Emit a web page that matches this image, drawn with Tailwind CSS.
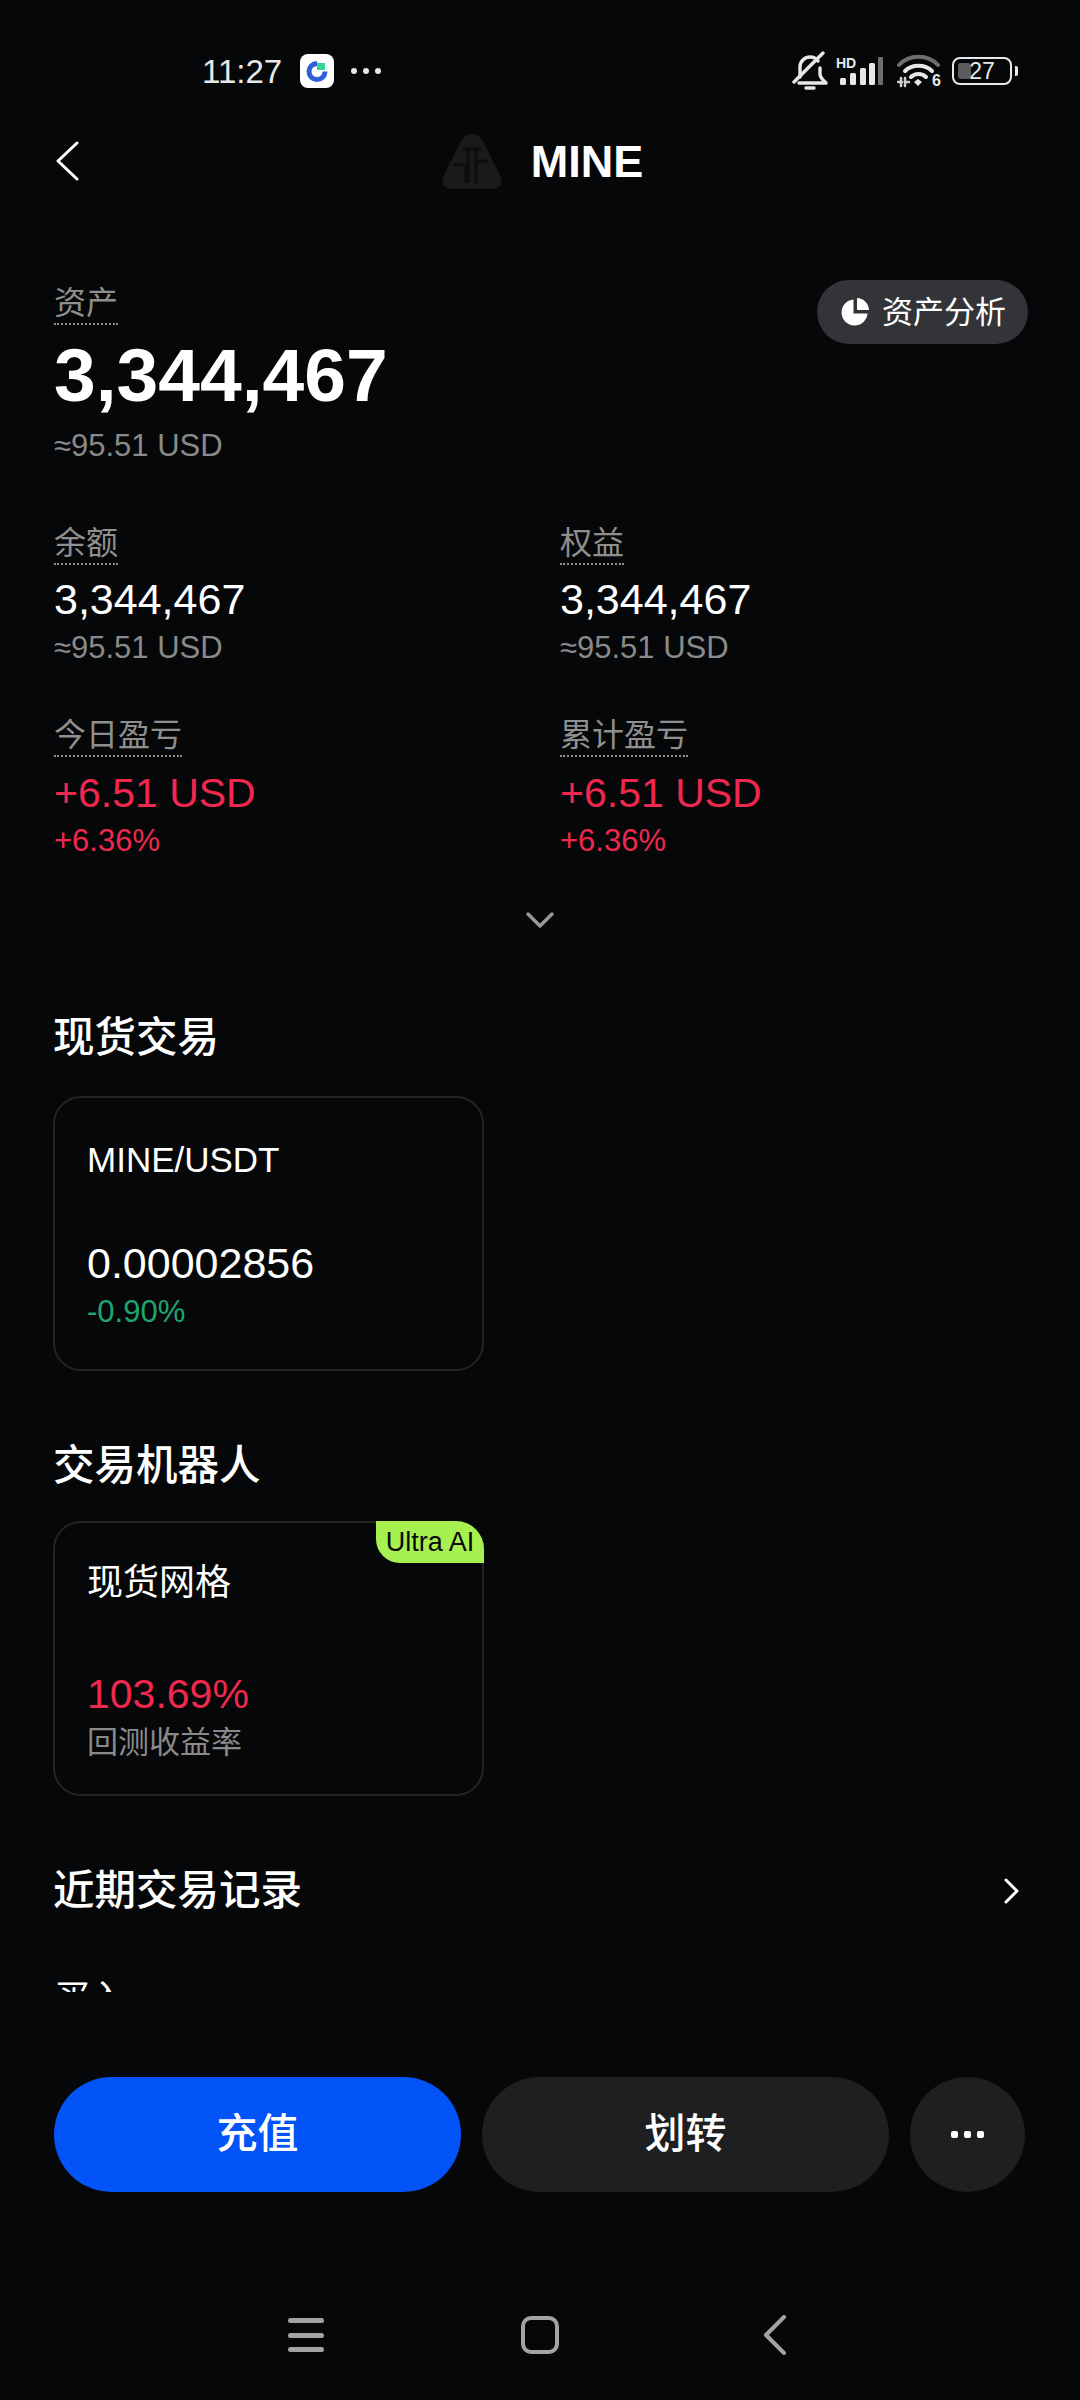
<!DOCTYPE html>
<html lang="zh-CN">
<head>
    <meta charset="UTF-8">
    <meta name="viewport" content="width=device-width, initial-scale=1.0">
    <title>MINE</title>
    <script src="https://cdn.jsdelivr.net/npm/@tailwindcss/browser@4"></script>
</head>
<body class="bg-[#060708]">
    <div class="w-[1080px] h-[2400px] flex flex-col overflow-hidden bg-[#060708] text-white [font-family:'Liberation_Sans','Noto_Sans_CJK_SC',sans-serif]">

        <!-- Status bar -->
        <div class="h-[118px] pt-[24px] pl-[202px] pr-[62px] flex items-center justify-between shrink-0">
            <div class="flex items-center">
                <span class="text-[33px] leading-none text-[#e8e8e8] w-[98px]">11:27</span>
                <div class="w-[34px] h-[34px] rounded-[8px] bg-white flex items-center justify-center">
                    <svg width="28" height="28" viewBox="0 0 28 28" fill="none">
                        <path d="M14 4 A10.5 10.5 0 1 0 24.5 14.5 H19.5 A5.5 5.5 0 1 1 14 9 Z" fill="#2f5fd8"/>
                        <rect x="14" y="6" width="8" height="7" fill="#35d69a"/>
                    </svg>
                </div>
                <div class="ml-[17px] flex gap-[6px]">
                    <span class="w-[6px] h-[6px] rounded-full bg-[#e8e8e8]"></span>
                    <span class="w-[6px] h-[6px] rounded-full bg-[#e8e8e8]"></span>
                    <span class="w-[6px] h-[6px] rounded-full bg-[#e8e8e8]"></span>
                </div>
            </div>
            <div class="flex items-center">
                <svg width="36" height="40" viewBox="0 0 36 40" fill="none" stroke="#e8e8e8" stroke-width="3.4" stroke-linecap="round" stroke-linejoin="round">
                    <path d="M8 26 V16 C8 10 13 6 18 6 C21 6 24 7 26 10"/>
                    <path d="M28 17 V23 C28 27 31 29 34 32 H7"/>
                    <path d="M2 31 L31 2"/>
                    <path d="M14 37 H22"/>
                </svg>
                <div class="relative ml-[10px] w-[46px] h-[34px]">
                    <span class="absolute left-[-2px] top-[2px] text-[14px] leading-none font-bold text-[#e8e8e8]">HD</span>
                    <svg class="absolute left-0 top-0" width="46" height="34" viewBox="0 0 46 34" fill="#e8e8e8">
                        <rect x="2" y="24" width="6" height="7" rx="1.5"/>
                        <rect x="12" y="19" width="6" height="12" rx="1.5"/>
                        <rect x="22" y="14" width="6" height="17" rx="1.5"/>
                        <rect x="31" y="9" width="6" height="22" rx="1.5"/>
                        <rect x="40" y="3" width="5" height="28" rx="1" fill="#6e6e6e"/>
                    </svg>
                </div>
                <div class="relative ml-[13px] w-[43px] h-[34px]">
                    <svg width="43" height="34" viewBox="0 0 43 34" fill="none" stroke-linecap="round">
                        <path d="M2 11 C12 0 31 0 41 11" stroke="#6e6e6e" stroke-width="4"/>
                        <path d="M8 17 C15 10 28 10 35 17" stroke="#e8e8e8" stroke-width="4"/>
                        <path d="M14 23 C18 19 25 19 29 23" stroke="#e8e8e8" stroke-width="4"/>
                        <path d="M17 28 L21 25 L25 28 L21 32 Z" fill="#e8e8e8"/>
                        <path d="M1 28 H5 M4 24 V32 M8 24 V32 M8 28 H12" stroke="#cfcfcf" stroke-width="2.5"/>
                    </svg>
                    <span class="absolute right-[-1px] bottom-[-1px] text-[16px] leading-none font-bold text-[#e8e8e8]">6</span>
                </div>
                <div class="ml-[12px] flex items-center">
                    <div class="relative w-[60px] h-[28px] rounded-[8px] border-[2.5px] border-[#e8e8e8] flex items-center justify-center overflow-hidden">
                        <div class="absolute left-[4px] top-[4px] bottom-[4px] w-[13px] rounded-[3px] bg-[#5c5c5c]"></div>
                        <span class="relative text-[23px] leading-none text-[#e8e8e8]">27</span>
                    </div>
                    <div class="ml-[3px] w-[3px] h-[10px] rounded-r-[2px] bg-[#e8e8e8]"></div>
                </div>
            </div>
        </div>

        <!-- Header -->
        <div class="relative mt-[3px] h-[80px] shrink-0 flex items-center justify-center">
            <svg class="absolute left-[56px] top-[20px]" width="24" height="40" viewBox="0 0 24 40" fill="none" stroke="#ffffff" stroke-width="3" stroke-linecap="round" stroke-linejoin="round">
                <path d="M21 2 L2 20 L21 38"/>
            </svg>
            <div class="flex items-center gap-[28px] ml-[4px]">
                <svg width="62" height="58" viewBox="0 0 62 56">
                    <path d="M20 8 C25 -1 37 -1 42 8 L59 42 C63 50 59 56 51 56 H11 C3 56 -1 50 3 42 Z" fill="#191a1b"/>
                    <path d="M21 16 H41 M27 16 V50 M35 16 V50 M12 32 H25 M37 28 H47 M25 32 V50" stroke="#0c0d0e" stroke-width="3" fill="none"/>
                </svg>
                <span class="text-[45px] leading-none font-bold">MINE</span>
            </div>
        </div>

        <!-- Scroll content -->
        <div class="h-[1791px] shrink-0 overflow-hidden px-[54px] pt-[84px]">

            <!-- Asset total -->
            <div class="relative">
                <span class="inline-block text-[32px] leading-[36px] pb-[2px] text-[#8f8f8f] border-b-2 border-dotted border-[#8f8f8f]">资产</span>
                <div class="absolute right-[-2px] top-[-5px] h-[64px] pl-[24px] pr-[22px] rounded-full bg-[#333438] flex items-center gap-[13px]">
                    <svg width="28" height="28" viewBox="0 0 28 28" fill="#ffffff">
                        <path d="M12.5 1.5 V15.5 H26.5 A13 13 0 1 1 12.5 1.5 Z"/>
                        <path d="M16 0 A12.5 12.5 0 0 1 28 12 H16 Z"/>
                    </svg>
                    <span class="text-[31px] leading-none">资产分析</span>
                </div>
                <div class="mt-[13px] text-[75px] leading-[74px] font-bold">3,344,467</div>
                <div class="mt-[16px] text-[31px] leading-[36px] text-[#8a8a8a]">≈95.51 USD</div>
            </div>

            <!-- Stats grid -->
            <div class="mt-[61px] grid grid-cols-[506px_1fr] gap-y-[51px]">
                <div>
                    <span class="inline-block text-[32px] leading-[36px] pb-[2px] text-[#8f8f8f] border-b-2 border-dotted border-[#8f8f8f]">余额</span>
                    <div class="mt-[9px] text-[43px] leading-[50px]">3,344,467</div>
                    <div class="mt-[6px] text-[31px] leading-[36px] text-[#8a8a8a]">≈95.51 USD</div>
                </div>
                <div>
                    <span class="inline-block text-[32px] leading-[36px] pb-[2px] text-[#8f8f8f] border-b-2 border-dotted border-[#8f8f8f]">权益</span>
                    <div class="mt-[9px] text-[43px] leading-[50px]">3,344,467</div>
                    <div class="mt-[6px] text-[31px] leading-[36px] text-[#8a8a8a]">≈95.51 USD</div>
                </div>
                <div>
                    <span class="inline-block text-[32px] leading-[36px] pb-[2px] text-[#8f8f8f] border-b-2 border-dotted border-[#8f8f8f]">今日盈亏</span>
                    <div class="mt-[11px] text-[41px] leading-[50px] text-[#f0284f]">+6.51 USD</div>
                    <div class="mt-[5px] text-[31px] leading-[36px] text-[#f0284f]">+6.36%</div>
                </div>
                <div>
                    <span class="inline-block text-[32px] leading-[36px] pb-[2px] text-[#8f8f8f] border-b-2 border-dotted border-[#8f8f8f]">累计盈亏</span>
                    <div class="mt-[11px] text-[41px] leading-[50px] text-[#f0284f]">+6.51 USD</div>
                    <div class="mt-[5px] text-[31px] leading-[36px] text-[#f0284f]">+6.36%</div>
                </div>
            </div>

            <!-- Expand -->
            <div class="mt-[52px] flex justify-center">
                <svg width="30" height="18" viewBox="0 0 30 18" fill="none" stroke="#9a9a9a" stroke-width="3.4" stroke-linecap="round" stroke-linejoin="round">
                    <path d="M3 3 L15 15 L27 3"/>
                </svg>
            </div>

            <!-- Spot -->
            <h2 class="mt-[84px] ml-[-1px] text-[41.5px] leading-[50px] font-medium">现货交易</h2>
            <div class="mt-[33px] ml-[-1px] w-[431px] h-[275px] rounded-[28px] border-2 border-[#232426] pl-[32px] pt-[41px]">
                <div class="text-[35px] leading-[42px]">MINE/USDT</div>
                <div class="mt-[58px] text-[43px] leading-[48px]">0.00002856</div>
                <div class="mt-[7px] text-[31px] leading-[36px] text-[#1fa56e]">-0.90%</div>
            </div>

            <!-- Bots -->
            <h2 class="mt-[70px] ml-[-1px] text-[41.5px] leading-[50px] font-medium">交易机器人</h2>
            <div class="relative mt-[30px] ml-[-1px] w-[431px] h-[275px] rounded-[28px] border-2 border-[#232426] pl-[32px] pt-[39px]">
                <div class="absolute right-[-2px] top-[-2px] w-[108px] h-[42px] rounded-tr-[28px] rounded-bl-[24px] bg-[#a6f04f] flex items-center justify-center text-[27px] leading-none text-[#0a0a0a]">Ultra AI</div>
                <div class="text-[36px] leading-[42px]">现货网格</div>
                <div class="mt-[66px] text-[41px] leading-[48px] text-[#f0284f]">103.69%</div>
                <div class="mt-[6px] text-[31px] leading-[38px] text-[#8a8a8a]">回测收益率</div>
            </div>

            <!-- Recent trades -->
            <div class="mt-[70px] flex items-center justify-between h-[50px]">
                <h2 class="ml-[-1px] text-[41.5px] leading-[50px] font-medium">近期交易记录</h2>
                <svg class="mr-[7px]" width="16" height="26" viewBox="0 0 16 26" fill="none" stroke="#ffffff" stroke-width="3" stroke-linecap="round" stroke-linejoin="round">
                    <path d="M3 2 L14 13 L3 24"/>
                </svg>
            </div>
            <div class="mt-[62px] text-[36px] leading-[42px]">买入</div>
        </div>

        <!-- Action bar -->
        <div class="mt-[85px] shrink-0 px-[54px] flex gap-[21px]">
            <button class="w-[407px] h-[115px] rounded-full bg-[#0254f9] text-[41px] font-medium">充值</button>
            <button class="w-[407px] h-[115px] rounded-full bg-[#1e1f20] text-[41px] font-medium">划转</button>
            <button class="w-[115px] h-[115px] rounded-full bg-[#1e1f20] flex items-center justify-center gap-[6px]">
                <span class="w-[7px] h-[7px] rounded-[2px] bg-white"></span>
                <span class="w-[7px] h-[7px] rounded-[2px] bg-white"></span>
                <span class="w-[7px] h-[7px] rounded-[2px] bg-white"></span>
            </button>
        </div>

        <!-- Android nav -->
        <div class="mt-[123px] pl-[288px] flex items-center">
            <div class="w-[36px] h-[34px] flex flex-col justify-between">
                <span class="h-[5px] rounded-full bg-[#a3a3a3]"></span>
                <span class="h-[5px] rounded-full bg-[#a3a3a3]"></span>
                <span class="h-[5px] rounded-full bg-[#a3a3a3]"></span>
            </div>
            <div class="ml-[197px] w-[38px] h-[38px] rounded-[10px] border-[4px] border-[#a3a3a3]"></div>
            <svg class="ml-[204px]" width="24" height="40" viewBox="0 0 24 40" fill="none" stroke="#a3a3a3" stroke-width="4" stroke-linecap="round" stroke-linejoin="round">
                <path d="M21 2 L3 20 L21 38"/>
            </svg>
        </div>
    </div>
</body>
</html>
